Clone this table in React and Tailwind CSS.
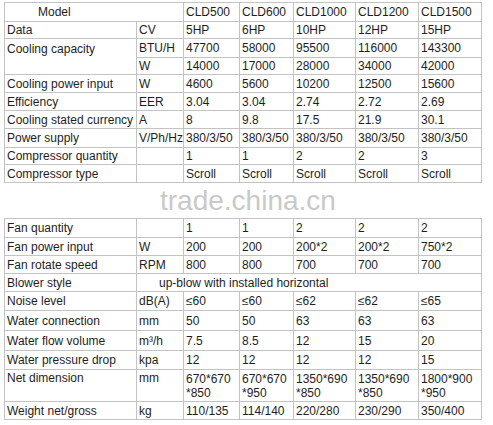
import React from "react";

const line = "border-[#c3c3c3]";

const top = [
  ["Data", "CV", "5HP", "6HP", "10HP", "12HP", "15HP"],
  ["Cooling capacity", "BTU/H", "47700", "58000", "95500", "116000", "143300"],
  [null, "W", "14000", "17000", "28000", "34000", "42000"],
  ["Cooling power input", "W", "4600", "5600", "10200", "12500", "15600"],
  ["Efficiency", "EER", "3.04", "3.04", "2.74", "2.72", "2.69"],
  ["Cooling stated currency", "A", "8", "9.8", "17.5", "21.9", "30.1"],
  ["Power supply", "V/Ph/Hz", "380/3/50", "380/3/50", "380/3/50", "380/3/50", "380/3/50"],
  ["Compressor quantity", "", "1", "1", "2", "2", "3"],
  ["Compressor type", "", "Scroll", "Scroll", "Scroll", "Scroll", "Scroll"],
];

const fans = [
  ["Fan quantity", "", "1", "1", "2", "2", "2"],
  ["Fan power input", "W", "200", "200", "200*2", "200*2", "750*2"],
  ["Fan rotate speed", "RPM", "800", "800", "700", "700", "700"],
];

const bottom = [
  ["Noise level", "dB(A)", "≤60", "≤60", "≤62", "≤62", "≤65"],
  ["Water connection", "mm", "50", "50", "63", "63", "63"],
  ["Water flow volume", "m³/h", "7.5", "8.5", "12", "15", "20"],
  ["Water pressure drop", "kpa", "12", "12", "12", "12", "15"],
];

const dims = [
  ["670*670", "*850"],
  ["670*670", "*950"],
  ["1350*690", "*850"],
  ["1350*690", "*850"],
  ["1800*900", "*950"],
];

function Cell({ children, first, head, className = "" }) {
  return (
    <div
      className={`border-r border-b ${line} ${first ? "border-l" : ""} ${head ? "border-t" : ""} flex items-center pl-[2px] whitespace-nowrap ${className}`}
    >
      {children}
    </div>
  );
}

function Row({ cells }) {
  return cells.map((c, i) => {
    if (c === null) return null;
    if (i === 0 && c === "Cooling capacity") {
      return (
        <Cell key={i} first className="row-span-2 !items-start pt-[1px] leading-[18px]">
          {c}
        </Cell>
      );
    }
    return (
      <Cell key={i} first={i === 0}>
        {c}
      </Cell>
    );
  });
}

export default function App() {
  return (
    <div className="w-[493px] h-[425px] bg-white pt-[2px] pl-[4px] text-[12px] text-[#1e1e1e] font-['Liberation_Sans',Arial,sans-serif]">
      <div className="grid grid-cols-[133px_47px_56px_54px_62px_63px_63px] grid-rows-[20px_17px_19px_17px_18px_18px_18px_19px_17px_18px_36px_19px_18px_18px_18px_19px_20px_20px_19px_32px_18px] w-[478px]">
        <Cell first head className="col-span-2 pl-[33px]">Model</Cell>
        {["CLD500", "CLD600", "CLD1000", "CLD1200", "CLD1500"].map((m) => (
          <Cell key={m} head>{m}</Cell>
        ))}

        {top.map((r, i) => (
          <Row key={"t" + i} cells={r} />
        ))}

        <div className={`col-span-7 border-b ${line} flex items-end pl-[156px] pb-[1px]`}>
          <span className="text-[28px] leading-[32px] text-[#c9c9c9]">trade.china.cn</span>
        </div>

        {fans.map((r, i) => (
          <Row key={"f" + i} cells={r} />
        ))}

        <Cell first>Blower style</Cell>
        <Cell className="col-span-6 pl-[22px]">up-blow with installed horizontal</Cell>

        {bottom.map((r, i) => (
          <Row key={"b" + i} cells={r} />
        ))}

        <Cell first className="!items-start pt-[1px] leading-[14px]">Net dimension</Cell>
        <Cell className="!items-start pt-[1px] leading-[14px]">mm</Cell>
        {dims.map((d, i) => (
          <Cell key={"d" + i} className="flex-col !items-start justify-center leading-[14px]">
            <span>{d[0]}</span>
            <span>{d[1]}</span>
          </Cell>
        ))}

        <Row cells={["Weight net/gross", "kg", "110/135", "114/140", "220/280", "230/290", "350/400"]} />
      </div>
    </div>
  );
}
